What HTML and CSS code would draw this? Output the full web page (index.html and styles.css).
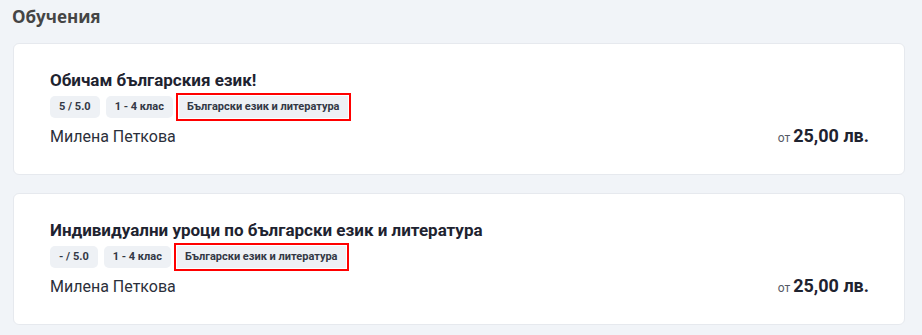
FILE: index.html
```html
<!DOCTYPE html>
<html lang="bg">
<head>
<meta charset="utf-8">
<link rel="stylesheet" href="styles.css">
</head>
<body>
<main class="page">
  <h2 class="section-title">Обучения</h2>
  <div class="list">
    <article class="card">
      <h3 class="card-title">Обичам българския език!</h3>
      <div class="chips">
        <span class="chip">5 / 5.0</span>
        <span class="chip">1 - 4 клас</span>
        <span class="chip chip-marked">Български език и литература</span>
      </div>
      <div class="card-foot">
        <span class="author">Милена Петкова</span>
        <span class="price"><span class="price-from">от</span>25,00 лв.</span>
      </div>
    </article>
    <article class="card">
      <h3 class="card-title">Индивидуални уроци по български език и литература</h3>
      <div class="chips">
        <span class="chip">- / 5.0</span>
        <span class="chip">1 - 4 клас</span>
        <span class="chip chip-marked">Български език и литература</span>
      </div>
      <div class="card-foot">
        <span class="author">Милена Петкова</span>
        <span class="price"><span class="price-from">от</span>25,00 лв.</span>
      </div>
    </article>
  </div>
</main>
</body>
</html>
```
FILE: styles.css
```css
html, body {
  margin: 0;
  padding: 0;
  background: #f1f4f8;
}
.page {
  padding: 4px 17px 0 13px;
  font-family: Roboto, "Liberation Sans", sans-serif;
}
.section-title {
  margin: 0 0 13px -1px;
  font-family: "Open Sans", "Liberation Sans", sans-serif;
  font-size: 17px;
  line-height: 26px;
  font-weight: 700;
  color: #454545;
}
.list {
  display: flex;
  flex-direction: column;
  gap: 18px;
}
.card {
  background: #fff;
  border: 1px solid #e6e9ee;
  border-radius: 6px;
  padding: 25px 35px 26px 36px;
}
.card-title {
  margin: 0 0 5px 0;
  font-size: 17px;
  line-height: 22px;
  font-weight: 700;
  color: #1e2330;
}
.chips {
  display: flex;
  gap: 6px;
  align-items: center;
}
.chip {
  display: inline-block;
  background: #eef1f5;
  border-radius: 5px;
  padding: 0 9px;
  height: 22px;
  line-height: 22px;
  font-size: 11px;
  font-weight: 700;
  color: #333845;
}
.chip-marked {
  margin-left: 0;
  border-radius: 0;
  padding: 0 8px;
  box-shadow: 0 0 0 1px #fff, 0 0 0 3px #ff0000;
}
.card-foot {
  display: flex;
  justify-content: space-between;
  align-items: baseline;
  margin-top: 7px;
}
.author {
  font-size: 16px;
  line-height: 22px;
  color: #2b2f3a;
}
.price {
  font-size: 18px;
  font-weight: 700;
  color: #1e2330;
}
.price-from {
  font-size: 12px;
  font-weight: 400;
  color: #555a66;
  margin-right: 3px;
}
```
